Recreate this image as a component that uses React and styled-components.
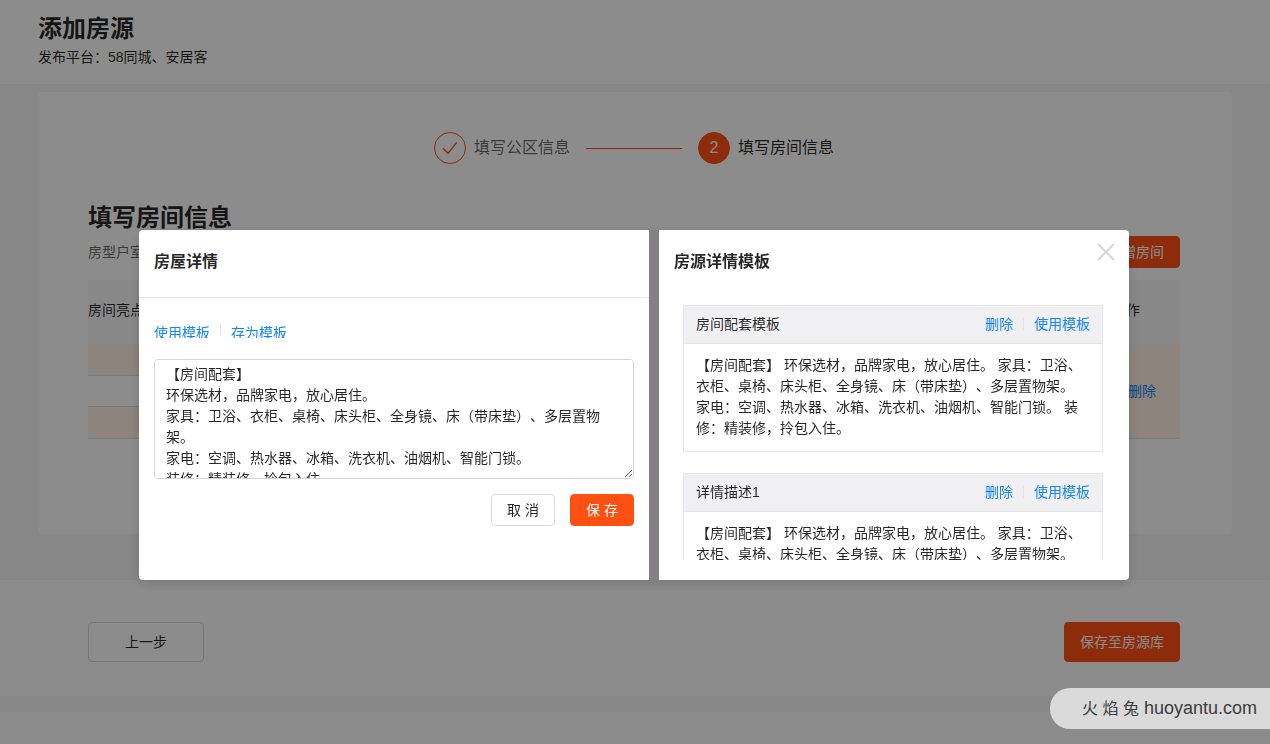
import { useState } from 'react';
import styled, { createGlobalStyle, css } from 'styled-components';

const DETAIL_TEXT = `【房间配套】
环保选材，品牌家电，放心居住。
家具：卫浴、衣柜、桌椅、床头柜、全身镜、床（带床垫）、多层置物架。
家电：空调、热水器、冰箱、洗衣机、油烟机、智能门锁。
装修：精装修，拎包入住。`;

const TEMPLATES = [
  { id: 1, name: '房间配套模板', text: DETAIL_TEXT },
  { id: 2, name: '详情描述1', text: DETAIL_TEXT },
];

const RoomPage = () => (
  <Page>
    <Header>
      <PageTitle>添加房源</PageTitle>
      <Platform>发布平台：58同城、安居客</Platform>
    </Header>
    <Content>
      <Card>
        <Steps>
          <Step>
            <StepIcon>
              <svg width='16' height='16' viewBox='0 0 16 16' fill='none'>
                <path d='M1.2 8.2 6 13.4 14.8 2.4' stroke='#ff5014' strokeWidth='1.5' />
              </svg>
            </StepIcon>
            填写公区信息
          </Step>
          <StepLine />
          <Step $active>
            <StepIcon $active>2</StepIcon>
            填写房间信息
          </Step>
        </Steps>
        <PageTitle>填写房间信息</PageTitle>
        <SubRow>
          <span>房型户室</span>
          <Button $primary>新增房间</Button>
        </SubRow>
        <RoomTable>
          <thead>
            <tr>
              <th>房间亮点</th>
              <ActionHead>操作</ActionHead>
            </tr>
          </thead>
          <tbody>
            <tr>
              <td>
                <RoomInput aria-label='房间亮点' />
              </td>
              <ActionCell>
                <LinkButton>删除</LinkButton>
              </ActionCell>
            </tr>
          </tbody>
        </RoomTable>
      </Card>
    </Content>
    <Footer>
      <Button $large>上一步</Button>
      <Button $large $primary>
        保存至房源库
      </Button>
    </Footer>
  </Page>
);

const DetailPanel = ({ value, onChange }) => (
  <Panel $grow={51}>
    <PanelHeader $bordered>
      <PanelTitle>房屋详情</PanelTitle>
    </PanelHeader>
    <DetailBody>
      <TemplateLinks>
        <LinkButton $clipped>使用模板</LinkButton>
        <Divider />
        <LinkButton $clipped>存为模板</LinkButton>
      </TemplateLinks>
      <DetailInput
        aria-label='房屋详情'
        value={value}
        onChange={(e) => onChange(e.target.value)}
      />
      <Actions>
        <Button>取 消</Button>
        <Button $primary>保 存</Button>
      </Actions>
    </DetailBody>
  </Panel>
);

const TemplatePanel = ({ onUse, onClose }) => (
  <Panel $grow={47} $right>
    <PanelHeader>
      <PanelTitle>房源详情模板</PanelTitle>
      <CloseButton aria-label='关闭' onClick={onClose}>
        <svg width='18' height='18' viewBox='0 0 18 18' fill='none'>
          <path
            d='M1.5 1.5 16.5 16.5M16.5 1.5 1.5 16.5'
            stroke='#d8d5d8'
            strokeWidth='2'
            strokeLinecap='round'
          />
        </svg>
      </CloseButton>
    </PanelHeader>
    <TemplateList>
      {TEMPLATES.map(({ id, name, text }) => (
        <Template key={id}>
          <TemplateHeader>
            <TemplateName>{name}</TemplateName>
            <LinkButton>删除</LinkButton>
            <Divider />
            <LinkButton onClick={() => onUse(text)}>使用模板</LinkButton>
          </TemplateHeader>
          <TemplateText>{text}</TemplateText>
        </Template>
      ))}
    </TemplateList>
  </Panel>
);

const App = () => {
  const [open, setOpen] = useState(true);
  const [detail, setDetail] = useState(DETAIL_TEXT);

  return (
    <>
      <GlobalStyle />
      <RoomPage />
      {open && (
        <Mask>
          <Modal role='dialog' aria-label='房屋详情'>
            <DetailPanel value={detail} onChange={setDetail} />
            <TemplatePanel onUse={setDetail} onClose={() => setOpen(false)} />
          </Modal>
        </Mask>
      )}
      <Watermark>
        <SiteName>火 焰 兔</SiteName> huoyantu.com
      </Watermark>
    </>
  );
};

export default App;

const GlobalStyle = createGlobalStyle`
  * {
    box-sizing: border-box;
  }

  body {
    margin: 0;
    background: #fff;
    color: rgba(0, 0, 0, 0.85);
    font-family: 'Liberation Sans', 'Noto Sans CJK SC', sans-serif;
    font-size: 14px;
    line-height: 22px;
    text-spacing-trim: space-all;
  }

  button,
  input,
  textarea {
    font: inherit;
    color: inherit;
    text-spacing-trim: inherit;
  }
`;

const Page = styled.div`
  min-height: 100vh;
`;

const Header = styled.header`
  padding: 13px 38px 17px;
`;

const PageTitle = styled.h1`
  margin: 0 0 2px;
  font-size: 24px;
  font-weight: 600;
  line-height: 32px;
`;

const Platform = styled.div`
  line-height: 20px;
`;

const Content = styled.main`
  padding: 8px 38px 46px;
  background: #f6f6f6;
`;

const Card = styled.section`
  padding: 40px 52px 95px 50px;
  border-radius: 4px;
  background: #fff;
`;

const Steps = styled.div`
  display: flex;
  justify-content: center;
  align-items: center;
  gap: 16px;
  margin-bottom: 38px;
`;

const Step = styled.div`
  display: flex;
  align-items: center;
  gap: 8px;
  font-size: 16px;
  color: ${({ $active }) => ($active ? 'rgba(0, 0, 0, 0.85)' : 'rgba(0, 0, 0, 0.6)')};
`;

const StepIcon = styled.span`
  display: flex;
  justify-content: center;
  align-items: center;
  width: 32px;
  height: 32px;
  border: 1px solid #ff5014;
  border-radius: 50%;
  background: ${({ $active }) => ($active ? '#ff5014' : '#fff')};
  color: #fff;
`;

const StepLine = styled.div`
  width: 96px;
  height: 1px;
  background: #ff5014;
`;

const SubRow = styled.div`
  display: flex;
  justify-content: space-between;
  align-items: center;
  margin-bottom: 12px;
  color: rgba(0, 0, 0, 0.6);
`;

const Button = styled.button`
  min-width: ${({ $large }) => ($large ? '116px' : '64px')};
  height: ${({ $large }) => ($large ? '40px' : '32px')};
  padding: 0 15px;
  border: 1px solid #d9d9d9;
  border-radius: 4px;
  background: #fff;
  color: rgba(0, 0, 0, 0.85);
  cursor: pointer;

  ${({ $primary }) =>
    $primary &&
    css`
      border-color: #ff5014;
      background: #ff5014;
      color: #fff;
    `}
`;

const LinkButton = styled.button`
  height: ${({ $clipped }) => ($clipped ? '16px' : '22px')};
  padding: 0;
  border: 0;
  background: none;
  color: #1286f5;
  line-height: 22px;
  overflow: hidden;
  cursor: pointer;

  ${({ $clipped }) =>
    $clipped &&
    css`
      display: flex;
      align-items: flex-start;
    `}
`;

const RoomTable = styled.table`
  width: 100%;
  border-collapse: collapse;
  table-layout: fixed;

  th {
    height: 64px;
    padding: 0 0 4px;
    background: #f8f7f9;
    font-weight: 400;
    text-align: left;
  }

  td {
    height: 94px;
    padding: 0;
    border-bottom: 1px solid #e8e0d8;
    background: #fff0e4;
  }
`;

const ActionHead = styled.th`
  width: 120px;

  && {
    padding-left: 52px;
  }
`;

const ActionCell = styled.td`
  text-align: right;

  && {
    padding-right: 24px;
  }
`;

const RoomInput = styled.input`
  display: block;
  width: 100%;
  height: 32px;
  padding: 4px 11px;
  border: 1px solid #d9d9d9;
  border-width: 1px 0;
  background: #fff;
`;

const Footer = styled.footer`
  display: flex;
  justify-content: space-between;
  padding: 42px 90px 34px 88px;
  border-bottom: 16px solid #f6f6f6;
`;

const Mask = styled.div`
  position: fixed;
  inset: 0;
  padding: 230px 12px 0 10px;
  background: rgba(0, 0, 0, 0.45);
`;

const Modal = styled.div`
  display: flex;
  gap: 10px;
  max-width: 990px;
  height: 350px;
  margin: 0 auto;
  border-radius: 4px;
  background: #838183;
  box-shadow: 0 4px 12px rgba(0, 0, 0, 0.15);
`;

const Panel = styled.section`
  display: flex;
  flex-direction: column;
  flex: ${({ $grow }) => $grow} 1 0;
  min-width: 0;
  border-radius: ${({ $right }) => ($right ? '0 4px 4px 0' : '4px 0 0 4px')};
  background: #fff;
`;

const PanelHeader = styled.header`
  display: flex;
  justify-content: space-between;
  padding: 21px 14px 24px 15px;
  border-bottom: 1px solid ${({ $bordered }) => ($bordered ? '#e6e6e6' : 'transparent')};
`;

const PanelTitle = styled.h2`
  margin: 0;
  font-size: 16px;
  font-weight: 600;
  line-height: 22px;
`;

const CloseButton = styled.button`
  display: flex;
  align-self: flex-start;
  margin-top: -8px;
  padding: 0;
  border: 0;
  background: none;
  cursor: pointer;
`;

const DetailBody = styled.div`
  padding: 24px 15px;
`;

const TemplateLinks = styled.div`
  display: flex;
  align-items: center;
  margin-bottom: 21px;
`;

const Divider = styled.span`
  width: 1px;
  height: 12px;
  margin: 0 10px;
  background: #e4e4e6;
`;

const DetailInput = styled.textarea`
  display: block;
  width: 100%;
  height: 120px;
  padding: 4px 11px;
  border: 1px solid #d4d4d6;
  border-radius: 4px;
  line-height: 21px;
  resize: vertical;
  outline: none;
  scrollbar-width: none;
`;

const Actions = styled.div`
  display: flex;
  justify-content: flex-end;
  gap: 15px;
  margin-top: 15px;
`;

const TemplateList = styled.div`
  flex: 1;
  margin: 7px 26px 20px 24px;
  overflow-y: auto;
  scrollbar-width: none;
`;

const Template = styled.article`
  margin-bottom: 21px;
  border: 1px solid #e6e6e9;
`;

const TemplateHeader = styled.header`
  display: flex;
  align-items: center;
  padding: 7px 12px 8px;
  border-bottom: 1px solid #e6e6e9;
  background: #f0f0f2;
`;

const TemplateName = styled.h3`
  flex: 1;
  margin: 0;
  font-size: 14px;
  font-weight: 400;
`;

const TemplateText = styled.p`
  margin: 0;
  padding: 11px 12px 12px;
  line-height: 21px;
`;

const Watermark = styled.div`
  position: fixed;
  right: 0;
  bottom: 15px;
  padding: 0 13px 0 32px;
  border-radius: 20px 0 0 20px;
  background: #dadada;
  color: #3c3c3c;
  font-size: 18px;
  line-height: 41px;
`;

const SiteName = styled.span`
  font-size: 16px;
`;
